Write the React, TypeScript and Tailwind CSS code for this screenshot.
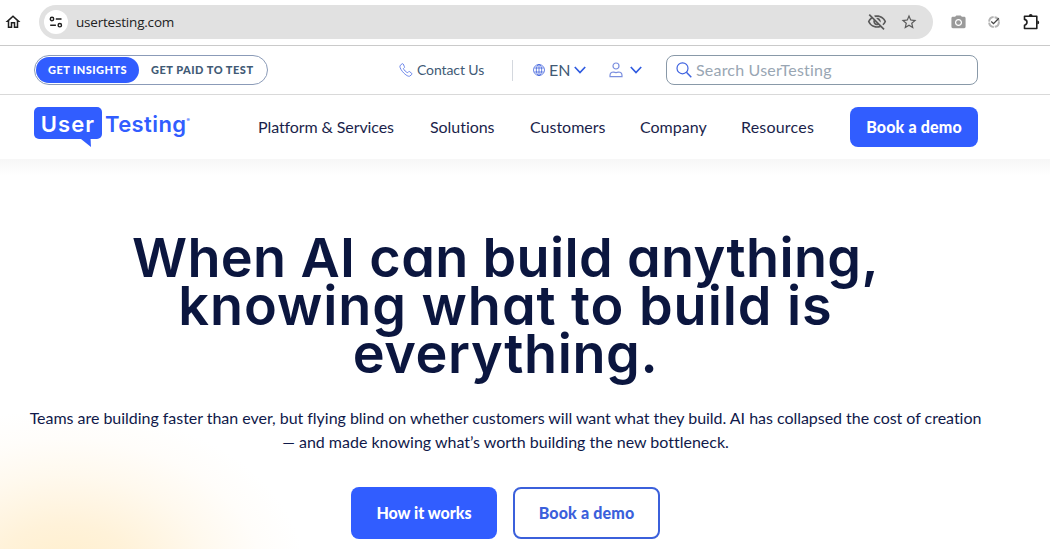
import React from 'react';
import {
  MdOutlineHome,
  MdOutlineStarBorder,
  MdOutlineVisibilityOff,
  MdPhotoCamera,
} from 'react-icons/md';

const navItems = [
  { label: 'Platform & Services', className: 'w-[172px] tracking-[-0.1px]' },
  { label: 'Solutions', className: 'w-[100px] tracking-[-0.05px]' },
  { label: 'Customers', className: 'w-[110px]' },
  { label: 'Company', className: 'w-[101px]' },
  { label: 'Resources', className: 'w-[109px] tracking-[0.2px]' },
];

const TuneIcon = () => (
  <svg width="14" height="14" viewBox="0 0 14 14" fill="none" stroke="#1f1f1f" strokeWidth="1.4">
    <circle cx="3" cy="4" r="1.7" />
    <path d="M6.8 4h5.7M1.2 10.2h5.7" />
    <circle cx="10.8" cy="10.2" r="1.7" />
  </svg>
);

const CheckBadgeIcon = () => (
  <svg width="14" height="14" viewBox="0 0 14 14" fill="none">
    <circle cx="7" cy="7" r="4.9" stroke="#b4b4b4" strokeWidth="2" strokeDasharray="6.7 1" />
    <path d="M4.3 6.5l2.2 2.1 5.3-5.4" stroke="#444" strokeWidth="1.3" />
  </svg>
);

const PuzzleIcon = () => (
  <svg width="18" height="18" viewBox="0 0 18 18" fill="none">
    <path
      d="M2.5 3.2h12.3v12.3H2.5v-3.3c1.6-.4 2.5-1.500 2.500-2.900S4.100 6.800 2.500 6.400z"
      stroke="#1f1f1f"
      strokeWidth="1.6"
      strokeLinejoin="round"
    />
    <path d="M6.800 3a1.900 1.900 0 0 1 3.800 0zM15.300 7.500a1.900 1.900 0 0 1 0 3.800z" fill="#1f1f1f" />
  </svg>
);

const PhoneIcon = () => (
  <svg width="14" height="14" viewBox="0 0 14 14" fill="none" stroke="#5b78e6" strokeWidth="0.9">
    <path
      d="M3.100.8L1.300 2.300C.4 3.200 1 5.500 3.500 8.600c3.200 3.700 6 5.200 7.300 4.500l1.900-1.600c.4-.4.4-.8 0-1.200l-2-1.600c-.4-.3-.8-.3-1.100 0l-1 1C7 9.200 5 7 4.400 5.600l.9-.9c.3-.3.4-.7.1-1.100L4.200 1C3.900.6 3.500.5 3.100.8z"
      strokeLinejoin="round"
    />
  </svg>
);

const GlobeIcon = () => (
  <svg width="12" height="12" viewBox="0 0 12 12" fill="none" stroke="#4466dd" strokeWidth="0.8">
    <circle cx="6" cy="6" r="5.5" />
    <ellipse cx="6" cy="6" rx="2.7" ry="5.5" />
    <path d="M6 .5v11M1.300 4h9.400M1.300 8h9.400" />
  </svg>
);

const UserIcon = () => (
  <svg width="14" height="16" viewBox="0 0 14 16" fill="none" stroke="#7b8fdf" strokeWidth="1.2">
    <circle cx="7" cy="4" r="3" />
    <path d="M1 14.700v-1.200c0-2.400 1.600-3.500 3.600-3.500 1.600.7 3.200.7 4.800 0 2 0 3.600 1.100 3.600 3.500v1.200z" />
  </svg>
);

const ChevronIcon = () => (
  <svg width="12" height="8" viewBox="0 0 12 8" fill="none" stroke="#2f5be0" strokeWidth="1.7">
    <path d="M.8 1L6 6.500 11.200 1" />
  </svg>
);

const SearchIcon = () => (
  <svg width="16" height="16" viewBox="0 0 16 16" fill="none" stroke="#3f63e0" strokeWidth="1.2">
    <circle cx="6.5" cy="6.3" r="5.5" />
    <path d="M10.400 10.300l4.900 5" strokeWidth="1.5" />
  </svg>
);

const BrowserBar: React.FC = () => (
  <div className="flex h-[46px] items-start border-b border-[#cacaca] pl-1 pt-[5px]">
    <div className="flex h-[34px] w-[35px] items-center">
      <MdOutlineHome size={18} color="#1f1f1f" />
    </div>
    <div className="flex h-[34px] w-[894px] items-center rounded-full bg-[#e1e1e1] pl-[5px]">
      <div className="flex size-6 items-center justify-center rounded-full bg-white">
        <TuneIcon />
      </div>
      <span className="ml-2 font-['Open_Sans',sans-serif] text-[13.5px] tracking-[-0.2px] text-[#222]">
        usertesting.com
      </span>
      <div className="ml-auto flex items-center gap-[13px] pr-[15px] text-[#5a5a5a]">
        <MdOutlineVisibilityOff size={20} />
        <MdOutlineStarBorder size={18} />
      </div>
    </div>
    <div className="ml-[17px] flex h-[34px] items-center">
      <MdPhotoCamera size={17} color="#9a9a9a" />
      <div className="ml-5">
        <CheckBadgeIcon />
      </div>
      <div className="ml-[21px]">
        <PuzzleIcon />
      </div>
    </div>
  </div>
);

const UtilityBar: React.FC = () => (
  <div className="flex h-[49px] items-center border-b border-[#d9d9d9] pl-[34px] text-[#415a75]">
    <div className="flex h-[30px] w-[234px] items-center whitespace-nowrap rounded-full border border-[#8b9bb8] p-px text-[11px] font-black">
      <div className="flex h-[26px] w-[103px] items-center justify-center rounded-full bg-[#315dff] tracking-[0.45px] text-white">
        GET INSIGHTS
      </div>
      <div className="ml-3 tracking-[0.5px]">GET PAID TO TEST</div>
    </div>
    <div className="ml-[131px] flex w-[113px] items-center">
      <PhoneIcon />
      <span className="-mt-0.5 ml-1 whitespace-nowrap text-[14px] tracking-[-0.1px]">Contact Us</span>
    </div>
    <div className="flex h-[21px] w-[21px] border-l border-[#d4d8de]" />
    <div className="flex w-[76px] items-center">
      <GlobeIcon />
      <span className="ml-1 mr-1 w-[21px] text-[16px]">EN</span>
      <ChevronIcon />
    </div>
    <div className="flex w-[57px] items-center">
      <UserIcon />
      <div className="ml-[7px]">
        <ChevronIcon />
      </div>
    </div>
    <div className="flex h-[30px] w-[312px] items-center rounded-lg border border-[#8999a8] pl-[9px]">
      <SearchIcon />
      <span className="ml-1 text-[16px] tracking-[0.2px] text-[#99a6b3]">Search UserTesting</span>
    </div>
  </div>
);

const Logo: React.FC = () => (
  <div className="relative flex h-8 w-[224px] font-['Inter',sans-serif] text-[22px] font-semibold leading-[34px]">
    <div className="h-8 w-[68px] rounded-[5px] bg-[#315dff] text-center tracking-[1.1px] text-white">
      User
    </div>
    <svg
      className="absolute left-[46px] top-[31px]"
      width="12"
      height="9"
      viewBox="0 0 12 9"
      fill="#315dff"
    >
      <path d="M0 0h10.500l.5 9L1 1z" />
    </svg>
    <div className="ml-[3px] tracking-[0.4px] text-[#315dff]">Testing</div>
    <span className="text-[5px] leading-[26px] text-[#315dff]">®</span>
  </div>
);

const NavBar: React.FC = () => (
  <nav className="flex h-16 items-center pl-[34px]">
    <div className="-mt-2">
      <Logo />
    </div>
    {navItems.map((item) => (
      <a key={item.label} className={`${item.className} whitespace-nowrap text-[16px] text-[#1b1f4b]`}>
        {item.label}
      </a>
    ))}
    <button className="h-10 w-32 rounded-lg bg-[#315dff] text-[16px] font-black tracking-[0.15px] text-white">
      Book a demo
    </button>
  </nav>
);

const Hero: React.FC = () => (
  <main className="h-[390px] overflow-hidden bg-[radial-gradient(ellipse_240px_165px_at_65px_415px,#ffeecb_0%,#fff2d9_30%,#fff9ee_60%,#fffdfa_82%,#ffffff_100%)]">
    <div className="h-4 bg-linear-to-b from-[#f7f7f7] to-transparent" />
    <div className="flex w-[1011px] flex-col items-center">
      <h1 className="mt-[59px] whitespace-nowrap text-center font-['Inter',sans-serif] text-[54px] font-semibold leading-[48px] text-[#0b163f] [font-feature-settings:'cv11']">
        <span className="tracking-[0.35px]">When AI can build anything,</span>
        <br />
        <span className="tracking-[0.95px]">knowing what to build is</span>
        <br />
        <span className="tracking-[0.6px]">everything.</span>
      </h1>
      <p className="mt-7 whitespace-nowrap text-center text-[16px] leading-6 text-[#10194a]">
        <span className="tracking-[-0.03px]">
          Teams are building faster than ever, but flying blind on whether customers will want what they build. AI has collapsed the cost of creation
        </span>
        <br />— and made knowing what’s worth building the new bottleneck.
      </p>
      <div className="mt-[33px] flex gap-4 text-[16px]">
        <button className="h-[52px] w-[146px] rounded-lg bg-[#315dff] font-black text-white">
          How it works
        </button>
        <button className="h-[52px] w-[147px] rounded-lg border-2 border-[#3b60db] bg-white font-black tracking-[0.15px] text-[#3b60db]">
          Book a demo
        </button>
      </div>
    </div>
  </main>
);

export default function App() {
  return (
    <div className="h-[549px] w-[1050px] overflow-hidden bg-white font-['Lato',sans-serif] [font-variant-ligatures:none]">
      <BrowserBar />
      <UtilityBar />
      <NavBar />
      <Hero />
    </div>
  );
}
